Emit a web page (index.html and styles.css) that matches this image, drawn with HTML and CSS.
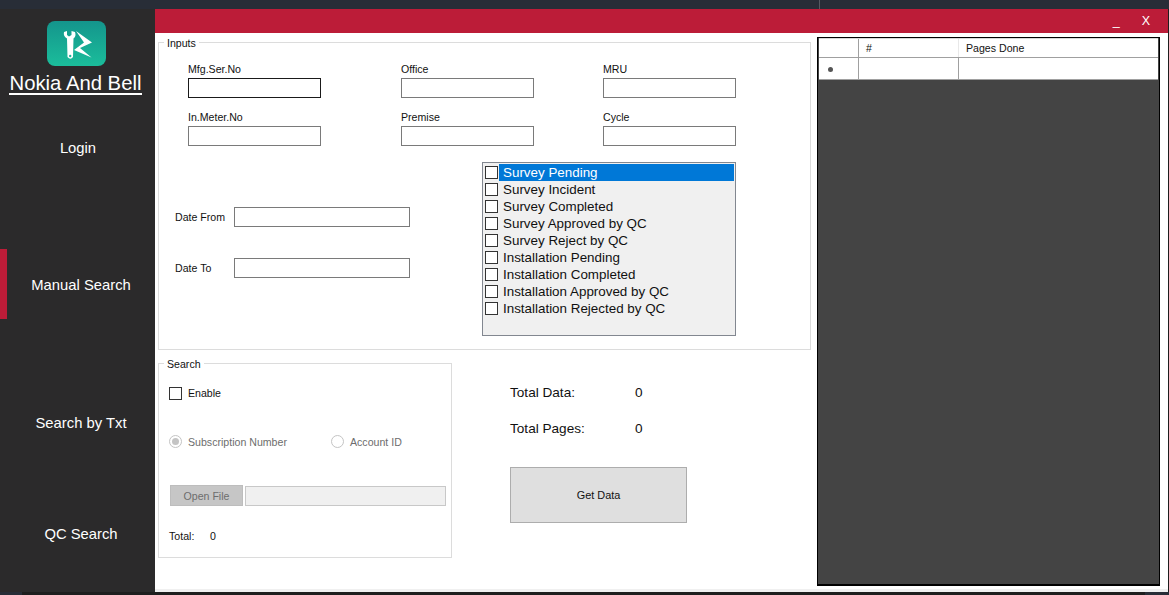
FILE: index.html
```html
<!DOCTYPE html>
<html>
<head>
    <title>Nokia And Bell</title>
    <link rel="stylesheet" href="styles.css">
</head>
<body>
    <div class="top-strip"><span class="strip-line"></span></div>
    <div class="window">
        <div class="sidebar">
            <svg class="logo" viewBox="0 0 59 45" width="59" height="45">
                <defs>
                    <linearGradient id="logoFill" x1="0" y1="0" x2="0" y2="1">
                        <stop offset="0" stop-color="#14958c"/>
                        <stop offset="1" stop-color="#1bbd9b"/>
                    </linearGradient>
                </defs>
                <rect width="59" height="45" rx="8" fill="url(#logoFill)"/>
                <path d="M17 11 L20 10 V14 L22 15.500 L24.500 14 V10 L28 11 Q29.500 15 26.500 17.500 L26 36 Q23.500 39.500 20.500 36 L20 17.500 Q16 15 17 11 Z" fill="#fff"/>
                <circle cx="23.200" cy="35" r="1.200" fill="#1bb298"/>
                <path d="M29 10 L45 21.500 L33 27 L44.500 36.500 L27 29 L37 21.500 Z" fill="#fff"/>
            </svg>
            <div class="app-title">Nokia And Bell</div>
            <div class="nav-item nav-login">Login</div>
            <div class="nav-item nav-manual">Manual Search</div>
            <div class="nav-item nav-txt">Search by Txt</div>
            <div class="nav-item nav-qc">QC Search</div>
        </div>
        <div class="main">
            <div class="title-bar">
                <span class="win-btn win-min">_</span>
                <span class="win-btn win-close">X</span>
            </div>
            <div class="content">
                <div class="left-col">
                    <div class="group inputs-group">
                        <span class="group-title">Inputs</span>
                        <div class="fields">
                            <div class="field"><label>Mfg.Ser.No</label><div class="textbox textbox-focus"></div></div>
                            <div class="field"><label>Office</label><div class="textbox"></div></div>
                            <div class="field"><label>MRU</label><div class="textbox"></div></div>
                            <div class="field"><label>In.Meter.No</label><div class="textbox"></div></div>
                            <div class="field"><label>Premise</label><div class="textbox"></div></div>
                            <div class="field"><label>Cycle</label><div class="textbox"></div></div>
                        </div>
                        <div class="filters">
                            <div class="dates">
                                <div class="date-row"><label>Date From</label><div class="textbox date-box"></div></div>
                                <div class="date-row"><label>Date To</label><div class="textbox date-box"></div></div>
                            </div>
                            <div class="checklist">
                                <div class="check-row selected"><span class="box"></span><span class="check-text">Survey Pending</span></div>
                                <div class="check-row"><span class="box"></span><span class="check-text">Survey Incident</span></div>
                                <div class="check-row"><span class="box"></span><span class="check-text">Survey Completed</span></div>
                                <div class="check-row"><span class="box"></span><span class="check-text">Survey Approved by QC</span></div>
                                <div class="check-row"><span class="box"></span><span class="check-text">Survey Reject by QC</span></div>
                                <div class="check-row"><span class="box"></span><span class="check-text">Installation Pending</span></div>
                                <div class="check-row"><span class="box"></span><span class="check-text">Installation Completed</span></div>
                                <div class="check-row"><span class="box"></span><span class="check-text">Installation Approved by QC</span></div>
                                <div class="check-row"><span class="box"></span><span class="check-text">Installation Rejected by QC</span></div>
                            </div>
                        </div>
                    </div>
                    <div class="lower">
                        <div class="group search-group">
                            <span class="group-title">Search</span>
                            <div class="enable-row"><span class="box"></span>Enable</div>
                            <div class="radio-row">
                                <span class="radio-item radio-sub"><span class="radio radio-on"></span>Subscription Number</span>
                                <span class="radio-item"><span class="radio"></span>Account ID</span>
                            </div>
                            <div class="file-row">
                                <div class="open-btn">Open File</div>
                                <div class="file-box"></div>
                            </div>
                            <div class="total-row"><span class="total-label">Total:</span><span>0</span></div>
                        </div>
                        <div class="summary">
                            <div class="stat stat-data"><span class="stat-label">Total Data:</span><span>0</span></div>
                            <div class="stat stat-pages"><span class="stat-label">Total Pages:</span><span>0</span></div>
                            <div class="get-btn">Get Data</div>
                        </div>
                    </div>
                </div>
                <div class="grid-panel">
                    <div class="grid-head">
                        <div class="cell cell-corner"></div>
                        <div class="cell cell-num">#</div>
                        <div class="cell cell-pages">Pages Done</div>
                    </div>
                    <div class="grid-row">
                        <div class="cell cell-corner cell-star"><span class="star"></span></div>
                        <div class="cell cell-num"></div>
                        <div class="cell cell-pages"></div>
                    </div>
                </div>
            </div>
        </div>
    </div>
    <div class="bottom-strip">
        <span class="strip-start"></span>
        <span class="strip-end"></span>
    </div>
</body>
</html>
```

FILE: styles.css
```css
* {
    box-sizing: border-box;
}

html, body {
    height: 100%;
}

body {
    margin: 0;
    overflow: hidden;
    background-color: #1e1e1e;
    font-family: "Liberation Sans", Arial, sans-serif;
    font-size: 10.600px;
    color: #111;
}

.top-strip {
    display: flex;
    height: 9px;
    padding-left: 819px;
    background-color: #282d37;
}

.strip-line {
    width: 1px;
    background-color: #565a62;
}

.window {
    display: flex;
    height: 583px;
    width: 1168px;
}

.bottom-strip {
    display: flex;
    justify-content: space-between;
    height: 3px;
    background-color: #1e1e1e;
}

.strip-start {
    width: 22px;
    background-color: #282d37;
}

.strip-end {
    width: 24px;
    background-color: #282d37;
}

/* left menu */
.sidebar {
    width: 155px;
    flex-shrink: 0;
    background-color: #2b2a2b;
    color: #fff;
    display: flex;
    flex-direction: column;
}

.logo {
    display: block;
    margin: 12px 0 0 47px;
}

.app-title {
    margin: 7px 0 0 9px;
    width: 133px;
    height: 22px;
    font-size: 20.300px;
    line-height: 20px;
    text-align: center;
    white-space: nowrap;
    border-bottom: 2px solid #fff;
}

.nav-item {
    height: 70px;
    line-height: 70px;
    font-size: 14.800px;
    text-align: center;
}

.nav-login {
    margin-top: 18px;
    width: 156px;
}

.nav-manual {
    margin-top: 66px;
    line-height: 72px;
    border-left: 7px solid #bc1c38;
}

.nav-txt {
    margin-top: 69px;
    padding-left: 7px;
}

.nav-qc {
    margin-top: 41px;
    padding-left: 7px;
}

/* main area */
.main {
    flex: 1;
    display: flex;
    flex-direction: column;
    background-color: #fff;
    border-bottom: 3px solid #f0f0f0;
}

.title-bar {
    height: 24px;
    flex-shrink: 0;
    background-color: #bc1c38;
    color: #fff;
    display: flex;
    justify-content: flex-end;
    align-items: center;
    font-size: 12.500px;
}

.win-min {
    margin-right: 22px;
}

.win-close {
    margin-right: 18px;
}

.content {
    flex: 1;
    display: flex;
    padding: 4px 8px 3px 3px;
}

.left-col {
    width: 653px;
}

.group {
    position: relative;
    border: 1px solid #dcdcdc;
}

.group-title {
    position: absolute;
    top: -6px;
    left: 5px;
    padding: 0 3px;
    background-color: #fff;
    line-height: 13px;
}

.inputs-group {
    margin-top: 5px;
    height: 308px;
    padding: 20px 0 0 29px;
}

.fields {
    display: grid;
    grid-template-columns: 213px 202px 133px;
    row-gap: 13px;
}

.field label {
    display: block;
    height: 15px;
    line-height: 13px;
}

.textbox {
    width: 133px;
    height: 20px;
    border: 1px solid #7a7a7a;
    background-color: #fff;
}

.textbox-focus {
    border-color: #1a1a1a;
}

.filters {
    display: flex;
    margin: 16px 0 0 -13px;
}

.dates {
    width: 307px;
    padding-top: 45px;
    display: flex;
    flex-direction: column;
    gap: 31px;
}

.date-row {
    display: flex;
    align-items: center;
}

.date-row label {
    width: 59px;
}

.date-box {
    width: 176px;
}

.checklist {
    width: 254px;
    height: 174px;
    border: 1px solid #828790;
    background-color: #f0f0f0;
    padding: 1px 1px 0 2px;
}

.check-row {
    display: flex;
    align-items: center;
    height: 17px;
    font-size: 13.400px;
    color: #111;
}

.box {
    display: block;
    width: 13px;
    height: 13px;
    flex-shrink: 0;
    border: 1px solid #333;
    background-color: #fff;
}

.check-text {
    flex: 1;
    margin-left: 1px;
    padding-left: 4px;
    line-height: 17px;
    white-space: nowrap;
}

.selected .check-text {
    background-color: #0078d7;
    color: #fff;
}

.lower {
    display: flex;
    margin-top: 13px;
}

.search-group {
    width: 294px;
    height: 195px;
    padding: 22px 0 0 10px;
}

.enable-row {
    display: flex;
    align-items: center;
    gap: 6px;
    height: 14px;
}

.radio-row {
    display: flex;
    margin-top: 35px;
    color: #6d6d6d;
}

.radio-item {
    display: flex;
    align-items: center;
    gap: 6px;
}

.radio-sub {
    width: 162px;
}

.radio {
    display: block;
    position: relative;
    width: 13px;
    height: 13px;
    border: 1px solid #c4c4c4;
    border-radius: 50%;
    background-color: #fff;
}

.radio-on::after {
    content: "";
    position: absolute;
    top: 2px;
    left: 2px;
    width: 7px;
    height: 7px;
    border-radius: 50%;
    background-color: #c4c4c4;
}

.file-row {
    display: flex;
    gap: 2px;
    margin: 37px 0 0 1px;
}

.open-btn {
    width: 73px;
    height: 21px;
    line-height: 21px;
    text-align: center;
    background-color: #c6c6c6;
    border: 1px solid #bdbdbd;
    color: #6d6d6d;
}

.file-box {
    width: 201px;
    height: 20px;
    margin-top: 1px;
    background-color: #f0f0f0;
    border: 1px solid #c8c8c8;
}

.total-row {
    display: flex;
    margin-top: 24px;
}

.total-label {
    width: 41px;
}

.summary {
    margin-left: 58px;
    font-size: 13.600px;
}

.stat {
    display: flex;
    height: 16px;
    line-height: 16px;
}

.stat-data {
    margin-top: 22px;
}

.stat-pages {
    margin-top: 20px;
}

.stat-label {
    width: 125px;
}

.get-btn {
    width: 177px;
    height: 56px;
    line-height: 54px;
    margin-top: 30px;
    text-align: center;
    font-size: 10.900px;
    background-color: #dfdfdf;
    border: 1px solid #adadad;
}

/* results grid */
.grid-panel {
    width: 343px;
    margin-left: 6px;
    background-color: #444;
    border: 1px solid #000;
    border-bottom-width: 2px;
}

.grid-head, .grid-row {
    display: flex;
    background-color: #fff;
    height: 20px;
    margin: 0 1px;
    border-bottom: 1px solid #a0a0a0;
    border-top: 1px solid #d8d8d8;
}

.grid-row {
    height: 22px;
    border-top: 0;
}

.cell {
    height: 100%;
    padding-left: 7px;
    line-height: 18px;
    border-right: 1px solid #a0a0a0;
}

.cell-corner {
    width: 40px;
}

.cell-num {
    width: 100px;
}

.cell-pages {
    flex: 1;
    border-right: 0;
}

.grid-head .cell-pages, .grid-head .cell-num {
    border-right-color: #e8e8e8;
}

.cell-star {
    display: flex;
    align-items: center;
    padding-top: 2px;
}

.star {
    display: block;
    width: 5px;
    height: 5px;
    margin-left: 2px;
    border-radius: 50%;
    background-color: #555;
}
```
